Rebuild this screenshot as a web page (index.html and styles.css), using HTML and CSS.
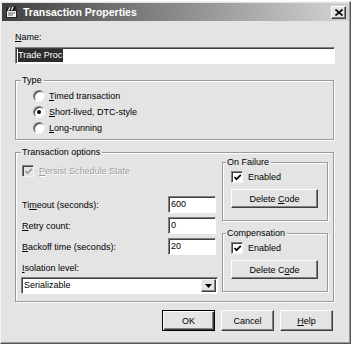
FILE: index.html
```html
<!DOCTYPE html>
<html>
<head>
	<title>Transaction Properties</title>
	<link rel="stylesheet" href="styles.css">
</head>
<body>
	<div class="window">
		<div class="titlebar">
			<svg class="appicon" width="13" height="12" viewBox="0 0 13 12">
				<rect x="1.5" y="4.5" width="10" height="7" fill="#f0f0f0" stroke="#202020"/>
				<path d="M1 1.5 L11 0 L11.6 3.5 L1.6 5 Z" fill="#202020"/>
				<path d="M3.5 4.6 L5 1.2 M6.5 4.2 L8 0.8" stroke="#fff" stroke-width="1.2"/>
				<path d="M3 7 H10 M3 9 H8" stroke="#606060"/>
			</svg>
			<span class="title">Transaction Properties</span>
			<span class="close">
				<svg width="8" height="7" viewBox="0 0 8 7"><path d="M0.5 0.5 L7.5 6.5 M7.5 0.5 L0.5 6.5" stroke="#000" stroke-width="1.6"/></svg>
			</span>
		</div>

		<div class="content">
			<div class="label"><u>N</u>ame:</div>
			<div class="textbox name"><span class="sel">Trade Proc</span></div>

			<fieldset class="group type">
				<legend>Type</legend>
				<div class="radio"><span class="rbox"></span><span><u>T</u>imed transaction</span></div>
				<div class="radio"><span class="rbox on"></span><span><u>S</u>hort-lived, DTC-style</span></div>
				<div class="radio"><span class="rbox"></span><span><u>L</u>ong-running</span></div>
			</fieldset>

			<fieldset class="group options">
				<legend>Transaction options</legend>
				<div class="opts">
					<div class="left">
						<div class="check disabled">
							<span class="cbox"><svg width="9" height="9" viewBox="0 0 9 9"><path d="M1.5 4 L3.5 6.2 L7.8 1.8" fill="none" stroke="#9c9c9c" stroke-width="1.7"/></svg></span>
							<span class="ctext"><u>P</u>ersist Schedule State</span>
						</div>
						<div class="field first"><span>Ti<u>m</u>eout (seconds):</span><div class="textbox num">600</div></div>
						<div class="field"><span><u>R</u>etry count:</span><div class="textbox num">0</div></div>
						<div class="field"><span><u>B</u>ackoff time (seconds):</span><div class="textbox num">20</div></div>
						<div class="label iso"><u>I</u>solation level:</div>
						<div class="textbox combo">
							<span class="combo-text">Serializable</span>
							<span class="drop"><svg width="7" height="4" viewBox="0 0 7 4"><path d="M0 0 H7 L3.5 4 Z" fill="#000"/></svg></span>
						</div>
					</div>
					<div class="right">
						<fieldset class="group sub">
							<legend>On Failure</legend>
							<div class="check">
								<span class="cbox"><svg width="9" height="9" viewBox="0 0 9 9"><path d="M1.5 4 L3.5 6.2 L7.8 1.8" fill="none" stroke="#000" stroke-width="1.7"/></svg></span>
								<span>Enabled</span>
							</div>
							<div class="btn wide"><span>Delete <u>C</u>ode</span></div>
						</fieldset>
						<fieldset class="group sub comp">
							<legend>Compensation</legend>
							<div class="check">
								<span class="cbox"><svg width="9" height="9" viewBox="0 0 9 9"><path d="M1.5 4 L3.5 6.2 L7.8 1.8" fill="none" stroke="#000" stroke-width="1.7"/></svg></span>
								<span>Enabled</span>
							</div>
							<div class="btn wide"><span>Delete C<u>o</u>de</span></div>
						</fieldset>
					</div>
				</div>
			</fieldset>

			<div class="buttons">
				<div class="btn default"><span>OK</span></div>
				<div class="btn"><span>Cancel</span></div>
				<div class="btn"><span><u>H</u>elp</span></div>
			</div>
		</div>
	</div>
</body>
</html>
```

FILE: styles.css
```css
body {
	margin: 0;
	background-color: #fff;
	font-family: "Liberation Sans", Arial, sans-serif;
	font-size: 9px;
	color: #000;
}
.window {
	box-sizing: border-box;
	width: 351px;
	height: 343px;
	margin-top: 1px;
	padding: 1px;
	background-color: #e4e4e4;
	border: 1px solid;
	border-color: #f4f4f4 #555 #555 #f4f4f4;
	box-shadow: inset -1px -1px #9a9a9a;
}
.titlebar {
	display: flex;
	align-items: center;
	height: 18px;
	padding: 0 3px 0 3px;
	background: linear-gradient(to right, #404040, #d4d4d4);
}
.title {
	flex: 1;
	margin-left: 5px;
	color: #fff;
	font-weight: bold;
	font-size: 10.5px;
}
.close {
	box-sizing: border-box;
	display: flex;
	align-items: center;
	justify-content: center;
	width: 15px;
	height: 13px;
	background-color: #e4e4e4;
	border: 1px solid;
	border-color: #fff #404040 #404040 #fff;
	box-shadow: inset -1px -1px #808080;
}
.content {
	padding: 10px 15px 0 13px;
}
.label {
	line-height: 12px;
}
.textbox {
	box-sizing: border-box;
	height: 17px;
	padding-left: 2px;
	line-height: 15px;
	background-color: #fff;
	border: 1px solid;
	border-color: #808080 #fff #fff #808080;
	box-shadow: inset 1px 1px #404040;
}
.name {
	margin-top: 4px;
	width: 320px;
}
.sel {
	background-color: #2c2c2c;
	color: #fff;
	padding: 1px 1px 2px 0;
}
.group {
	margin: 0;
	padding: 0;
	border: 1px solid #9a9a9a;
	box-shadow: inset 1px 1px #fff, 1px 1px #fff;
}
.group legend {
	padding: 0 2px 0 1px;
	line-height: 10px;
	background-color: #e4e4e4;
}
.type {
	margin-top: 11px;
	padding: 3px 0 3px 17px;
}
.type legend {
	margin-left: -12px;
}
.radio {
	display: flex;
	align-items: center;
	height: 16px;
}
.rbox {
	box-sizing: border-box;
	position: relative;
	width: 12px;
	height: 12px;
	margin-right: 4px;
	border-radius: 50%;
	background-color: #fff;
	border: 1px solid;
	border-color: #808080 #f4f4f4 #f4f4f4 #808080;
	box-shadow: inset 1px 1px #404040;
}
.rbox.on::after {
	content: "";
	position: absolute;
	left: 3px;
	top: 3px;
	width: 4px;
	height: 4px;
	border-radius: 50%;
	background-color: #000;
}
.options {
	margin-top: 7px;
	padding: 0 5px 7px 5px;
}
.options legend {
	margin-left: 0;
}
.opts {
	display: flex;
	gap: 4px;
}
.left {
	width: 197px;
}
.right {
	flex: 1;
}
.check {
	display: flex;
	align-items: center;
	height: 14px;
}
.left .check {
	margin-top: 7px;
	padding-left: 1px;
}
.cbox {
	box-sizing: border-box;
	display: flex;
	align-items: center;
	justify-content: center;
	width: 12px;
	height: 12px;
	margin-right: 5px;
	background-color: #fff;
	border: 1px solid;
	border-color: #808080 #f4f4f4 #f4f4f4 #808080;
	box-shadow: inset 1px 1px #404040;
}
.disabled .cbox {
	background-color: #e4e4e4;
}
.disabled .ctext {
	color: #9c9c9c;
	text-shadow: 1px 1px #fff;
}
.field {
	display: flex;
	align-items: center;
	justify-content: space-between;
	margin-top: 4px;
	padding-left: 1px;
}
.field.first {
	margin-top: 18px;
}
.num {
	width: 48px;
	margin-right: 2px;
}
.iso {
	margin-top: 7px;
	padding-left: 1px;
}
.combo {
	display: flex;
	margin-top: 3px;
	padding-right: 1px;
}
.combo-text {
	flex: 1;
}
.drop {
	box-sizing: border-box;
	display: flex;
	align-items: center;
	justify-content: center;
	width: 15px;
	height: 13px;
	margin-top: 1px;
	background-color: #e4e4e4;
	border: 1px solid;
	border-color: #f4f4f4 #404040 #404040 #f4f4f4;
	box-shadow: inset -1px -1px #808080;
}
.sub {
	padding: 3px 0 12px 8px;
}
.sub legend {
	margin-left: -5px;
}
.sub .btn {
	margin-top: 5px;
}
.comp {
	margin-top: 7px;
}
.btn {
	box-sizing: border-box;
	display: flex;
	align-items: center;
	justify-content: center;
	width: 53px;
	height: 21px;
	background-color: #e4e4e4;
	border: 1px solid;
	border-color: #fff #404040 #404040 #fff;
	box-shadow: inset -1px -1px #808080;
}
.btn.wide {
	width: 87px;
	height: 19px;
}
.btn.default {
	border-color: #000;
	box-shadow: inset 1px 1px #fff, inset -1px -1px #404040, inset -2px -2px #808080;
}
.buttons {
	display: flex;
	justify-content: flex-end;
	gap: 6px;
	margin-top: 8px;
	padding-right: 1px;
}
```
